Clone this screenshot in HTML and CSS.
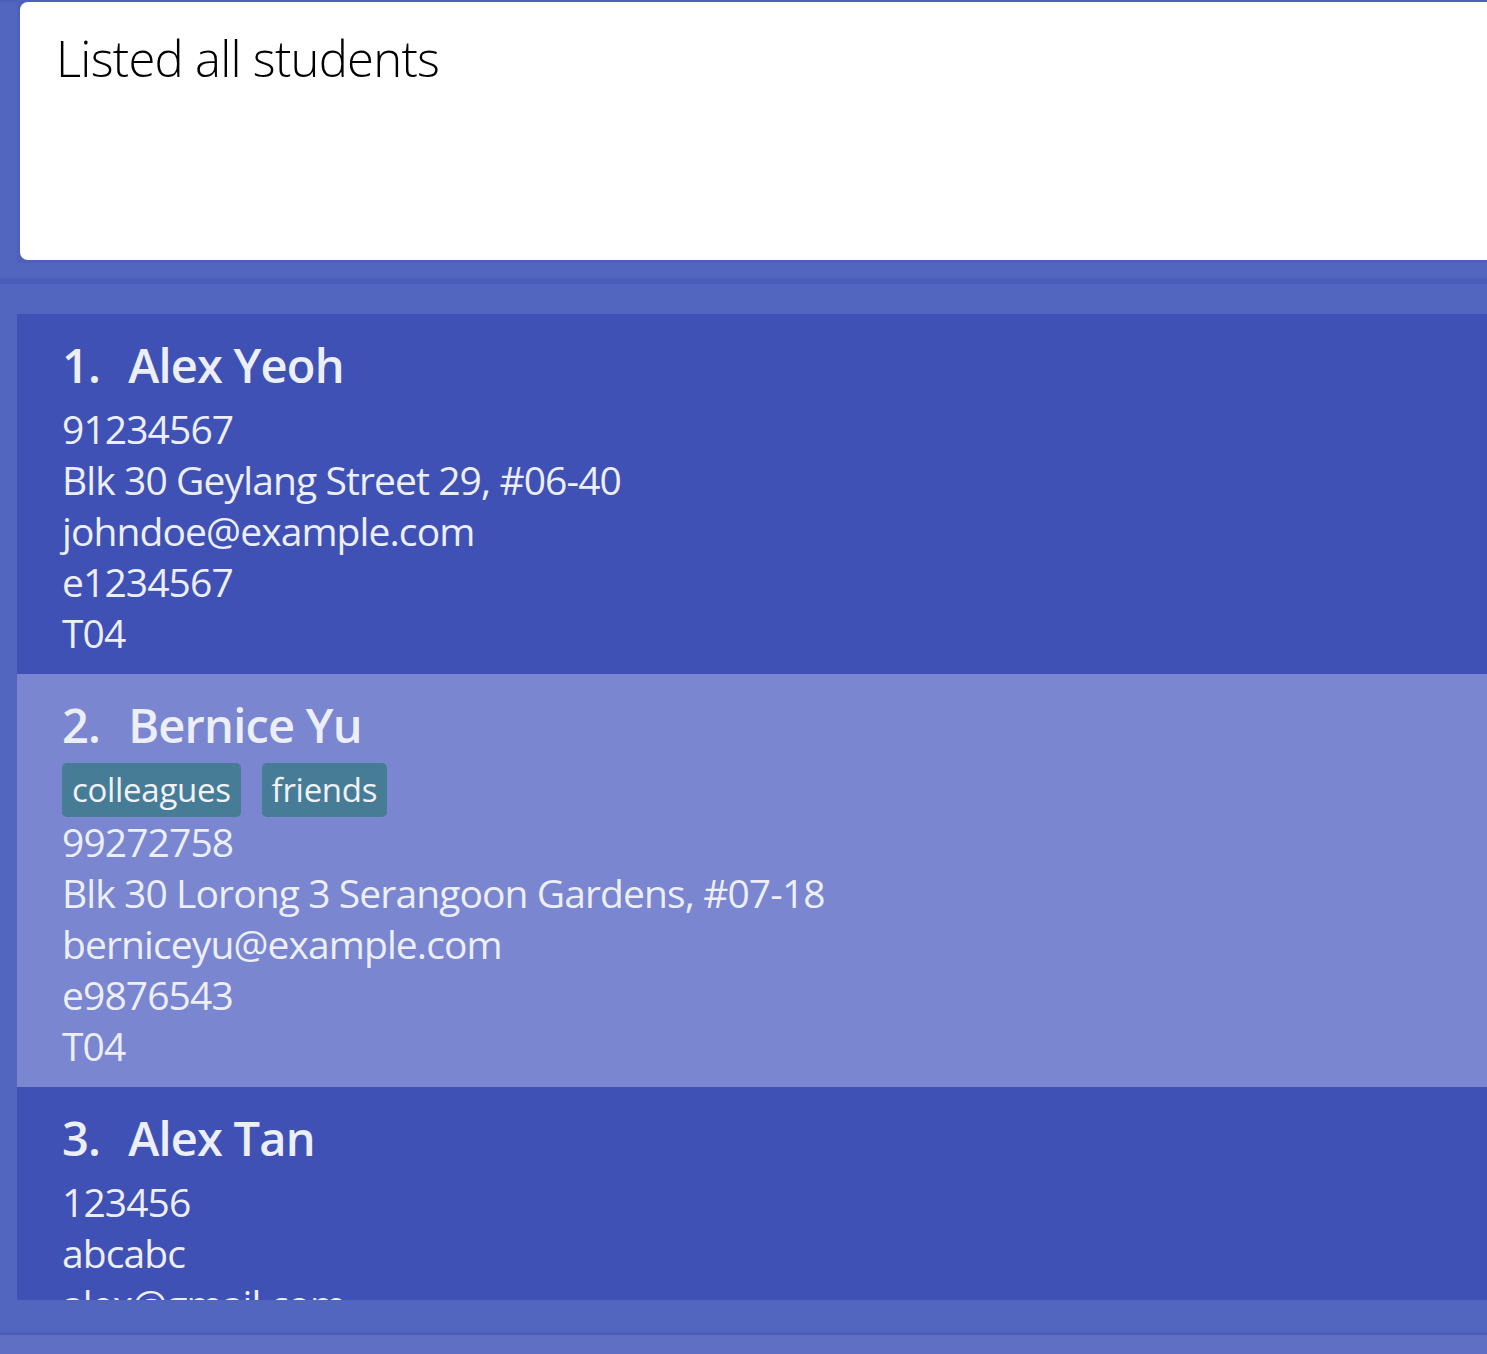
FILE: index.html
```html
<!DOCTYPE html>
<html>
<head>
<meta charset="utf-8">
<link rel="stylesheet" href="styles.css">
</head>
<body>
<div class="app">
  <div class="result-pane">
    <div class="result-frame">
      <div class="result-box">
        <div class="result-text">Listed all students</div>
      </div>
    </div>
  </div>
  <div class="divider"></div>
  <div class="list-pane">
    <div class="list">
      <div class="card dark">
        <div class="name-row"><span class="idx">1.</span><span class="name">Alex Yeoh</span></div>
        <div class="line">91234567</div>
        <div class="line">Blk 30 Geylang Street 29, #06-40</div>
        <div class="line">johndoe@example.com</div>
        <div class="line">e1234567</div>
        <div class="line">T04</div>
      </div>
      <div class="card light">
        <div class="name-row"><span class="idx">2.</span><span class="name">Bernice Yu</span></div>
        <div class="tags"><span class="tag">colleagues</span><span class="tag">friends</span></div>
        <div class="line">99272758</div>
        <div class="line">Blk 30 Lorong 3 Serangoon Gardens, #07-18</div>
        <div class="line">berniceyu@example.com</div>
        <div class="line">e9876543</div>
        <div class="line">T04</div>
      </div>
      <div class="card dark">
        <div class="name-row"><span class="idx">3.</span><span class="name">Alex Tan</span></div>
        <div class="line">123456</div>
        <div class="line">abcabc</div>
        <div class="line">alex@gmail.com</div>
        <div class="line">e1111111</div>
        <div class="line">T04</div>
      </div>
    </div>
  </div>
  <div class="bottom-line"></div>
  <div class="status"></div>
</div>
</body>
</html>
```
FILE: styles.css
```css
html, body {
  margin: 0;
  padding: 0;
  height: 100%;
  overflow: hidden;
}
body {
  background: #5366bf;
  font-family: "Open Sans", "Noto Sans", sans-serif;
}
.app {
  display: flex;
  flex-direction: column;
  height: 1354px;
}
.result-pane {
  border-top: 2px solid #4c5db9;
  padding: 0 0 0 17px;
  height: 263px;
  box-sizing: border-box;
}
.result-frame {
  background: #4f60bc;
  height: 263px;
  margin-top: -2px;
  padding: 2px 0 3px 3px;
  box-sizing: border-box;
}
.result-box {
  background: #ffffff;
  height: 258px;
  border-radius: 8px 0 0 8px;
  padding: 21px 0 0 36px;
  box-sizing: border-box;
}
.result-text {
  font-family: "Open Sans", "Noto Sans", sans-serif;
  font-weight: 300;
  font-size: 49px;
  letter-spacing: -0.75px;
  line-height: 70px;
  color: #000;
}
.divider {
  margin-top: 15px;
  height: 6px;
  background: #4b5cb9;
}
.list-pane {
  padding: 30px 0 0 17px;
}
.list {
  height: 986px;
  overflow: hidden;
}
.card {
  padding: 21px 0 16px 45px;
  color: #eceef8;
}
.card.dark { background: #3f51b5; }
.card.light { background: #7a86cf; }
.name-row {
  display: flex;
  font-weight: 600;
  font-size: 47px;
  letter-spacing: -0.8px;
  line-height: 60px;
  margin-bottom: 8px;
}
.idx {
  margin-right: 28px;
}
.line {
  font-size: 39px;
  letter-spacing: -0.9px;
  line-height: 51px;
  white-space: nowrap;
}
.tags {
  display: flex;
  gap: 21px;
  margin-top: 1px;
  margin-bottom: -1px;
}
.tag {
  background: #477c96;
  border-radius: 5px;
  height: 54px;
  line-height: 54px;
  padding: 0 10px;
  font-size: 33px;
  letter-spacing: -0.3px;
  color: #f0f2fa;
}
.bottom-line {
  margin-top: 32px;
  height: 3px;
  background: #4b5cb9;
}
.status {
  flex: 1;
  background: #5f6fc3;
}
```
